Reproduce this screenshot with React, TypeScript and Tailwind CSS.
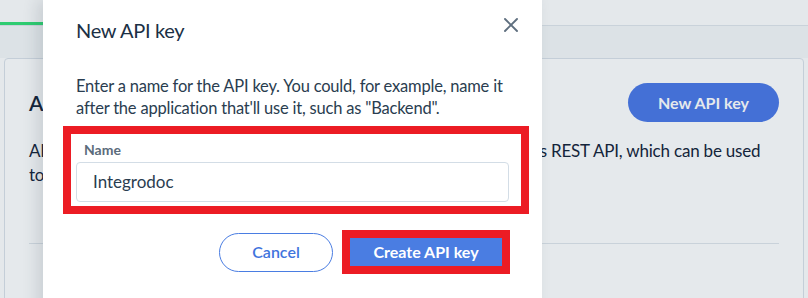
import { X } from "lucide-react";

export default function App() {
    return (
        <div className="relative h-[298px] w-[808px] overflow-hidden bg-[#e4e8eb] font-['Lato',sans-serif]">
            {/* page behind the dialog */}
            <div className="h-[26px] border-b border-[#c9d2da] pt-[22px]">
                <div className="h-[3px] w-[44px] bg-[#2ecc71]" />
            </div>
            <div className="h-[32px] bg-[#dce2e6]" />
            <div className="mx-[4px] h-[260px] rounded-t border border-[#c4ced8] bg-[#e5e9ec] px-6">
                <div className="flex items-center justify-between pt-6">
                    <h2 className="text-[21px] font-semibold text-[#13243a]">API keys</h2>
                    <button className="h-[39px] w-[151px] rounded-full bg-[#4470d6] text-[16px] font-bold text-[#e5e9ec]">
                        New API key
                    </button>
                </div>
                <p className="mt-[17px] text-[17px] leading-[24px] tracking-[-0.2px] text-[#13243a]">
                    <span className="block whitespace-nowrap">
                        API keys grant you and your own tools access to Integrodoc Workflow's REST API, which can be used
                    </span>
                    <span className="block whitespace-nowrap">to connect your own applications.</span>
                </p>
                <div className="mt-[56px] border-t border-[#c9d2da]" />
            </div>

            {/* dialog */}
            <div className="absolute left-[43px] top-0 h-[320px] w-[499px] bg-white px-[33px] shadow-[-6px_0_14px_rgba(40,55,70,0.14)]">
                <X className="absolute right-[19px] top-[13px] h-6 w-6 text-[#5f6f7f]" strokeWidth={1.9} />
                <h3 className="pt-[15px] text-[20px] leading-[30px] tracking-[-0.3px] text-[#1b3045]">New API key</h3>
                <p className="mt-[30px] whitespace-nowrap text-[16.5px] leading-[22px] tracking-[-0.2px] text-[#2a3d50]">
                    Enter a name for the API key. You could, for example, name it
                    <br />
                    after the application that'll use it, such as "Backend".
                </p>
                <div className="-ml-[13px] -mr-[20px] mt-[7px] border-[8px] border-[#ec1c24] pb-[4px] pl-[5px] pr-[12px] pt-[6px]">
                    <label className="block pl-[8px] text-[14px] font-bold leading-[20px] text-[#5b6b7b]">Name</label>
                    <div className="mt-[2px] flex h-[40px] items-center rounded border border-[#d3dde6] px-[16px] text-[17px] text-[#2a3d50]">
                        Integrodoc
                    </div>
                </div>
                <div className="-mr-[1px] mt-[16px] flex items-center justify-end gap-[9px]">
                    <button className="h-[39px] w-[114px] rounded-full border border-[#4a7de2] text-[16px] font-semibold text-[#3f74dd]">
                        Cancel
                    </button>
                    <div className="border-[8px] border-[#ec1c24]">
                        <button className="flex h-[28px] w-[152px] items-center justify-center bg-[#4a7de2] text-[16px] font-bold text-white">
                            Create API key
                        </button>
                    </div>
                </div>
            </div>
        </div>
    );
}
